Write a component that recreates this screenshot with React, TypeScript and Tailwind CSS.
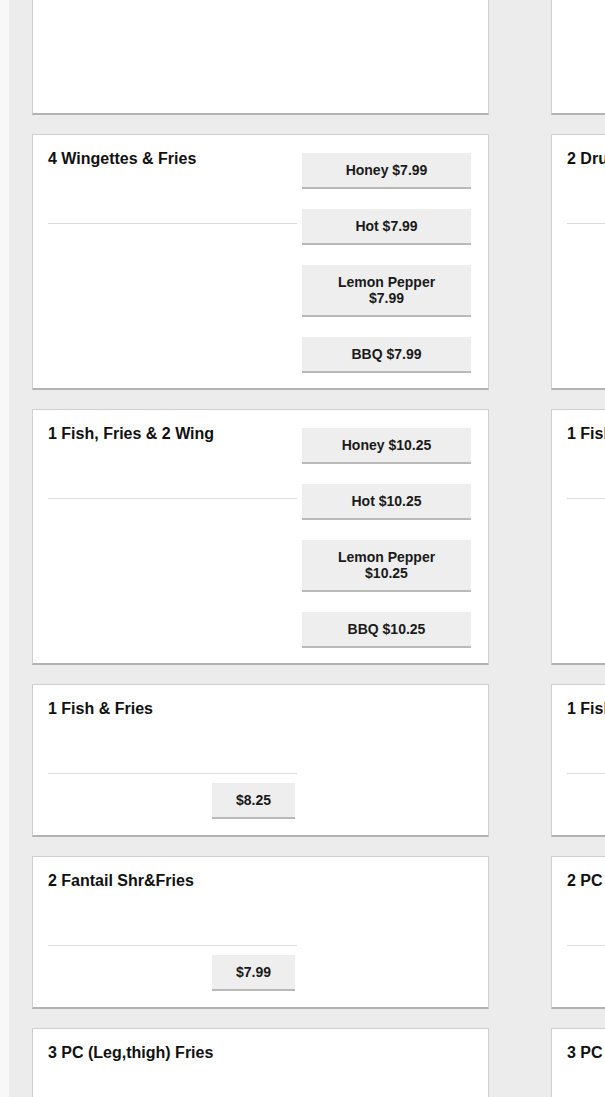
import React from "react";

type Item = { title: string; options?: string[]; price?: string; partial?: boolean };

function Btn({ children }: { children: React.ReactNode }) {
  return (
    <div className="bg-[#eeeeee] border-b-2 border-b-[#b9b9b9] px-[24px] py-[9px] text-[14px] leading-[16px] font-bold text-center text-[#1a1a1a]">
      {children}
    </div>
  );
}

function Card({ item }: { item: Item }) {
  if (item.partial) {
    return <div className="h-[115px] bg-white border border-t-0 border-[#cfcfcf] border-b-2 border-b-[#b3b3b3]" />;
  }
  return (
    <div className="bg-white border border-[#cfcfcf] border-b-2 border-b-[#b3b3b3] pl-[15px] pr-[17px] pt-[12px] pb-[15px] flex gap-[5px]">
      <div className="w-[249px] shrink-0 flex flex-col">
        <div className="h-[77px] border-b border-[#dcdcdc] text-[16px] font-bold text-[#111111]">{item.title}</div>
        {item.price && (
          <div className="flex justify-end mt-[9px] pr-[2px] mb-[1px]">
            <Btn>{item.price}</Btn>
          </div>
        )}
      </div>
      <div className="w-[169px] shrink-0 flex flex-col gap-[20px] pt-[6px]">
        {item.options?.map((o) => (
          <Btn key={o}>{o}</Btn>
        ))}
      </div>
    </div>
  );
}

const wings = (p: string) => [`Honey ${p}`, `Hot ${p}`, `Lemon Pepper ${p}`, `BBQ ${p}`];

const rows: [Item, Item][] = [
  [{ title: "", partial: true }, { title: "", partial: true }],
  [
    { title: "4 Wingettes & Fries", options: wings("$7.99") },
    { title: "2 Drumsticks & Fries", options: wings("$7.99") },
  ],
  [
    { title: "1 Fish, Fries & 2 Wing", options: wings("$10.25") },
    { title: "1 Fish, Fries & 3 Wing", options: wings("$11.25") },
  ],
  [
    { title: "1 Fish & Fries", price: "$8.25" },
    { title: "1 Fish & 2 Shrimp", price: "$9.25" },
  ],
  [
    { title: "2 Fantail Shr&Fries", price: "$7.99" },
    { title: "2 PC (Leg,thigh) Fries", price: "$7.99" },
  ],
  [
    { title: "3 PC (Leg,thigh) Fries", price: "$9.99" },
    { title: "3 PC (Breast) Fries", price: "$10.99" },
  ],
];

export default function App() {
  return (
    <div
      className="w-[605px] h-[1097px] overflow-hidden flex bg-[#ececec]"
      style={{ fontFamily: '"Liberation Sans", Arial, sans-serif' }}
    >
      <div className="w-[9px] shrink-0 bg-[#f8f8f8]" />
      <div className="flex-1 pl-[23px]">
        <div className="grid grid-cols-[457px_457px] gap-x-[62px] gap-y-[19px] w-max">
          {rows.flatMap((r, i) => [
            <Card key={`${i}a`} item={r[0]} />,
            <Card key={`${i}b`} item={r[1]} />,
          ])}
        </div>
      </div>
    </div>
  );
}
